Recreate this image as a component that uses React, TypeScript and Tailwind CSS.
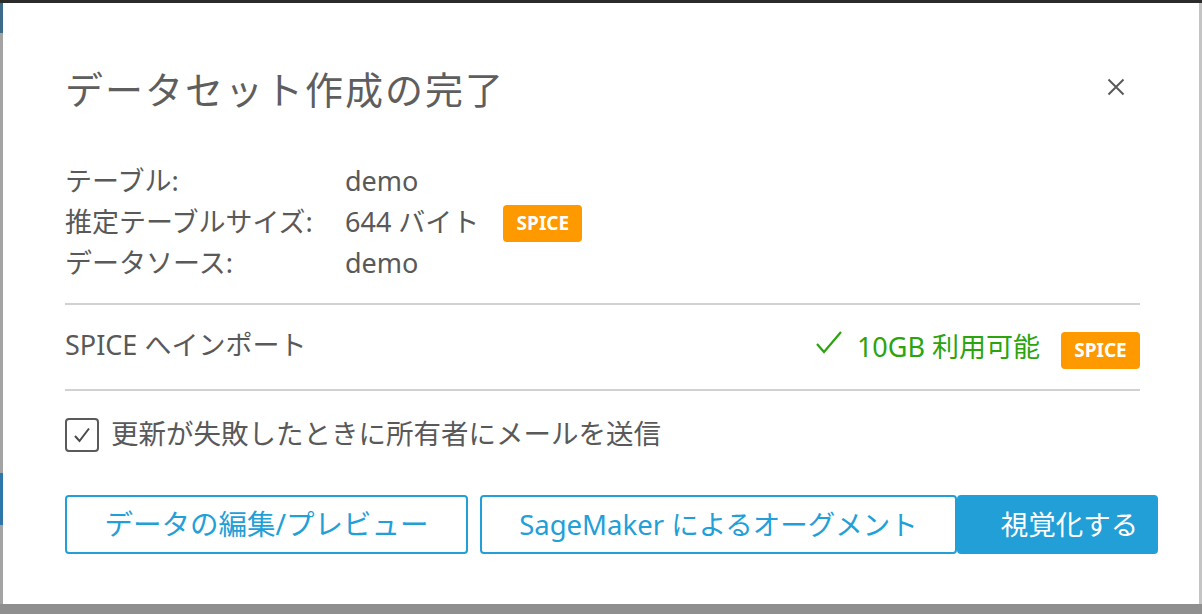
import React from 'react';

const SpiceBadge: React.FC<{ className?: string }> = ({ className = '' }) => (
  <span
    className={`inline-flex h-[37px] w-[79px] shrink-0 items-center justify-center rounded-[4px] bg-[#ff9900] text-[19px] font-bold text-white ${className}`}
  >
    SPICE
  </span>
);

const App: React.FC = () => {
  const rows = [
    { label: 'テーブル:', value: 'demo', badge: false },
    { label: '推定テーブルサイズ:', value: '644 バイト', badge: true },
    { label: 'データソース:', value: 'demo', badge: false },
  ];

  return (
    <div className="flex h-[614px] w-full flex-col bg-[#8f8f8f] font-['Noto_Sans','Noto_Sans_CJK_JP',sans-serif] text-[#595959]">
      <div className="h-[3px] shrink-0 bg-[#2b2b2b]" />
      <div className="flex flex-1 pb-[10px]">
        {/* page edge behind the dialog */}
        <div className="flex w-[3px] shrink-0 flex-col bg-[#a3a3a3]">
          <div className="h-[30px] bg-[#3d6a86]" />
          <div className="h-[440px]" />
          <div className="h-[52px] bg-[#2f77a8]" />
        </div>

        <div className="min-w-0 flex-1 bg-white pl-[62px] pr-[59px]">
          {/* header */}
          <div className="flex items-center justify-between pt-[62px]">
            <h1 className="h-[48px] text-[38px] font-normal leading-[48px] tracking-[2px] text-[#5e5e5e]">
              データセット作成の完了
            </h1>
            <button className="mr-[15px] mt-[-4px] text-[#5a5a5a]">
              <svg width="18" height="18" viewBox="0 0 18 18" fill="none" stroke="currentColor" strokeWidth="2">
                <path d="M1.5 1.5 L16.5 16.5 M16.5 1.5 L1.5 16.5" />
              </svg>
            </button>
          </div>

          {/* summary */}
          <div className="mt-[47px] text-[27px]">
            {rows.map((r) => (
              <div key={r.label} className="flex h-[41px] items-center leading-[41px]">
                <span className="w-[280px] shrink-0">{r.label}</span>
                <span>{r.value}</span>
                {r.badge && <SpiceBadge className="ml-[24px] mt-[4px] leading-none" />}
              </div>
            ))}
          </div>

          <div className="mt-[20px] h-[2px] bg-[#d1d1d1]" />

          {/* spice import */}
          <div className="flex h-[84px] items-center justify-between text-[27px]">
            <span className="-mt-[4px]">SPICE へインポート</span>
            <div className="flex items-center">
              <svg width="28" height="24" viewBox="0 0 28 24" fill="none" stroke="#2ba40e" strokeWidth="2.2" className="-mt-[8px] mr-[14px]">
                <path d="M2 13 L9 21 L26 1" />
              </svg>
              <span className="text-[#2ba40e]">10GB 利用可能</span>
              <SpiceBadge className="ml-[21px] mt-[6px] h-[36px] leading-none" />
            </div>
          </div>

          <div className="h-[2px] bg-[#d1d1d1]" />

          {/* notify checkbox */}
          <label className="mt-[25px] flex items-center text-[27.5px]">
            <span className="flex h-[34px] w-[34px] shrink-0 items-center justify-center rounded-[4px] border-2 border-[#5a5a5a]">
              <svg width="18" height="16" viewBox="0 0 18 16" fill="none" stroke="#4a4a4a" strokeWidth="2">
                <path d="M2 9 L6.5 14 L16 1.5" />
              </svg>
            </span>
            <span className="ml-[12px] -mt-[3px]">更新が失敗したときに所有者にメールを送信</span>
          </label>

          {/* actions */}
          <div className="-mr-[18px] mt-[41px] flex text-[27.5px]">
            <button className="flex h-[59px] w-[403px] shrink-0 items-center justify-center rounded-[4px] border-2 border-[#239fd8] text-[28.5px] text-[#239fd8]">
              データの編集/プレビュー
            </button>
            <button className="ml-[12px] flex h-[59px] w-[477px] shrink-0 items-center justify-center rounded-[4px] border-2 border-[#239fd8] text-[#239fd8]">
              SageMaker によるオーグメント
            </button>
            <button className="flex h-[59px] w-[201px] shrink-0 items-center justify-center rounded-[4px] bg-[#239fd8] pl-[24px] text-white">
              視覚化する
            </button>
          </div>
        </div>

        <div className="w-[3px] shrink-0 bg-[#c4c4c4]" />
      </div>
    </div>
  );
};

export default App;
